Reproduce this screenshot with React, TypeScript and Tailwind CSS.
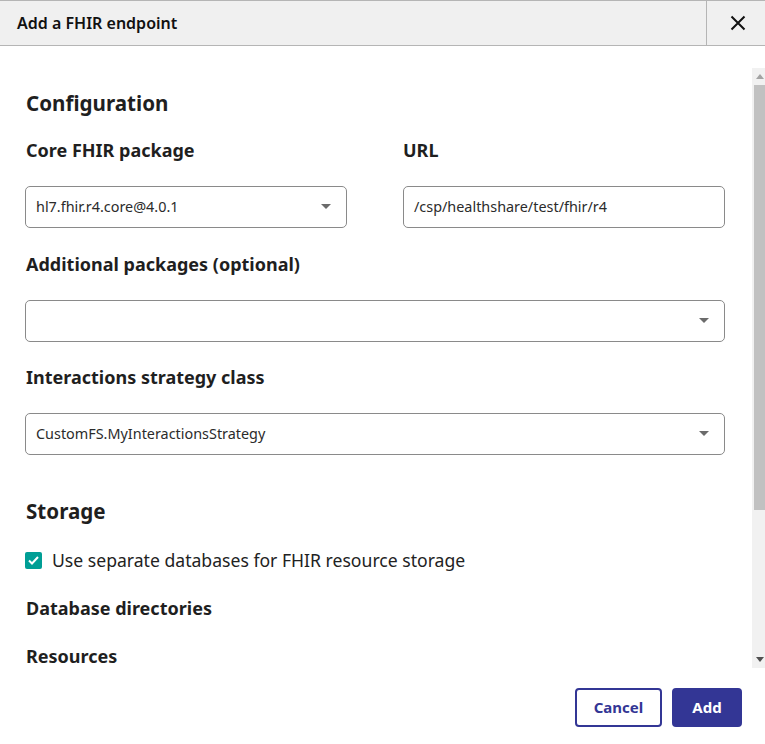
import React from 'react'

const font = { fontFamily: '"Noto Sans", "Open Sans", sans-serif' }

const Caret = () => (
  <svg width="10" height="6" viewBox="0 0 10 6" className="shrink-0">
    <path d="M0 0 L10 0 L5 5 Z" fill="#6b6b6b" />
  </svg>
)

const SelectBox = ({ value, className = '' }: { value: string; className?: string }) => (
  <div
    className={`flex items-center justify-between h-[42px] border border-[#8a8a8a] rounded-[5px] pl-[10px] pr-[15px] ${className}`}
  >
    <span className="text-[14.4px] text-[#2b2b2b]">{value}</span>
    <Caret />
  </div>
)

const Label = ({ children, className = '' }: { children: React.ReactNode; className?: string }) => (
  <div className={`text-[18px] leading-[24px] font-bold text-[#1f1f1f] ${className}`}>{children}</div>
)

const Scrollbar = () => (
  <div className="w-[13px] h-full bg-[#f1f1f1] flex flex-col shrink-0">
    <div className="h-[17px] flex items-center justify-center pl-[2px]">
      <svg width="8" height="5" viewBox="0 0 8 5">
        <path d="M0 5 L8 5 L4 0 Z" fill="#a3a3a3" />
      </svg>
    </div>
    <div className="ml-[2px] h-[425px] bg-[#c1c1c1]" />
    <div className="flex-1" />
    <div className="h-[17px] flex items-center justify-center pl-[2px]">
      <svg width="8" height="5" viewBox="0 0 8 5">
        <path d="M0 0 L8 0 L4 5 Z" fill="#505050" />
      </svg>
    </div>
  </div>
)

export default function App() {
  return (
    <div className="w-[765px] h-[744px] bg-white overflow-hidden flex flex-col" style={font}>
      <div className="h-[46px] shrink-0 flex items-stretch bg-[#f0f0f0] border-t border-b border-[#b5b5b5]">
        <div className="flex-1 flex items-center pl-[17px] text-[16px] font-semibold text-[#111]">
          Add a FHIR endpoint
        </div>
        <div className="w-[59px] flex items-center justify-center pl-[3px] border-l border-[#b5b5b5]">
          <svg width="16" height="16" viewBox="0 0 16 16">
            <path d="M1.5 1.5 L14.5 14.5 M14.5 1.5 L1.5 14.5" stroke="#111" strokeWidth="2" />
          </svg>
        </div>
      </div>

      <div className="mt-[22px] h-[600px] flex shrink-0">
        <div className="flex-1 overflow-hidden pl-[25px] pr-[27px] pt-[21px]">
          <div className="text-[20.6px] leading-[28px] font-bold text-[#1f1f1f] pl-[1px]">Configuration</div>

          <div className="grid grid-cols-2 gap-x-[56px] mt-[21px]">
            <div>
              <Label className="pl-[1px]">Core FHIR package</Label>
              <SelectBox value="hl7.fhir.r4.core@4.0.1" className="mt-[24px]" />
            </div>
            <div>
              <Label>URL</Label>
              <div className="mt-[24px] h-[42px] border border-[#8a8a8a] rounded-[5px] pl-[10px] flex items-center text-[14.4px] text-[#2b2b2b]">
                /csp/healthshare/test/fhir/r4
              </div>
            </div>
          </div>

          <Label className="mt-[24px] pl-[1px]">Additional packages (optional)</Label>
          <SelectBox value="" className="mt-[24px]" />

          <Label className="mt-[23px] pl-[1px]">Interactions strategy class</Label>
          <SelectBox value="CustomFS.MyInteractionsStrategy" className="mt-[24px]" />

          <div className="mt-[42px] text-[20.6px] leading-[28px] font-bold text-[#1f1f1f] pl-[1px]">Storage</div>

          <div className="mt-[22px] flex items-center gap-[10px]">
            <div className="w-[17px] h-[17px] rounded-[2px] bg-[#009e95] flex items-center justify-center">
              <svg width="11" height="9" viewBox="0 0 11 9">
                <path d="M1 4.5 L4 7.5 L10 1" stroke="white" strokeWidth="2" fill="none" />
              </svg>
            </div>
            <span className="text-[17.6px] leading-[26px] text-[#222]">Use separate databases for FHIR resource storage</span>
          </div>

          <Label className="mt-[23px] pl-[1px]">Database directories</Label>
          <Label className="mt-[24px] pl-[1px]">Resources</Label>
        </div>
        <Scrollbar />
      </div>

      <div className="flex justify-end gap-[10px] pt-[20px] pr-[23px]">
        <button className="w-[87px] h-[39px] border-2 border-[#333695] rounded-[4px] text-[15px] font-bold text-[#333695] bg-white">
          Cancel
        </button>
        <button className="w-[70px] h-[39px] border-2 border-[#333695] rounded-[4px] text-[15px] font-bold text-white bg-[#333695]">
          Add
        </button>
      </div>
    </div>
  )
}
